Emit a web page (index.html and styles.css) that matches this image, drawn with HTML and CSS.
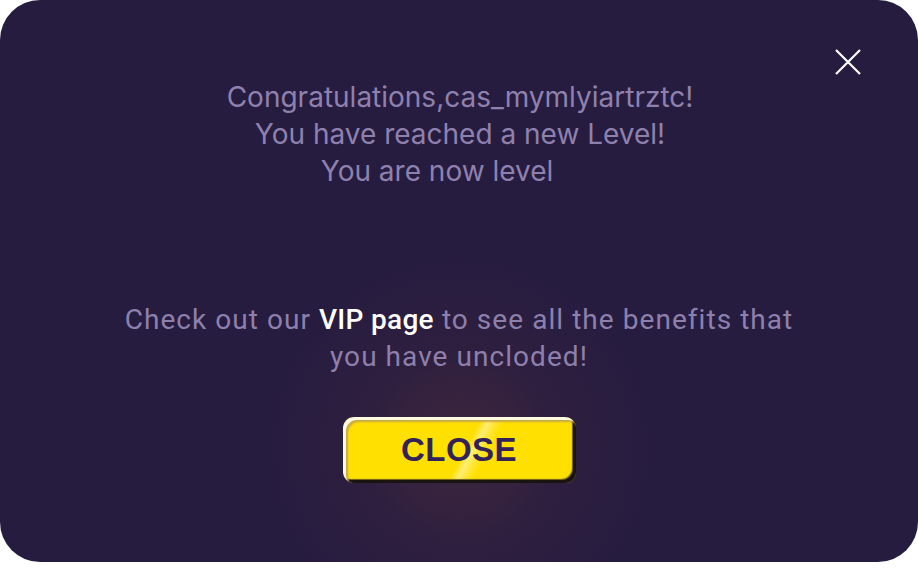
FILE: index.html
```html
<!DOCTYPE html>
<html>
<head>
<meta charset="utf-8">
<link rel="stylesheet" href="styles.css">
</head>
<body>
<div class="modal">
  <button class="x-btn" aria-label="Close">
    <svg width="28" height="28" viewBox="0 0 28 28"><path d="M2 2 L26 26 M26 2 L2 26" stroke="#fff" stroke-width="2.2" fill="none"/></svg>
  </button>
  <div class="congrats">
    <p>Congratulations,cas_mymlyiartrztc!</p>
    <p>You have reached a new Level!</p>
    <p>You are now level <span class="lvl"></span></p>
  </div>
  <p class="vip">Check out our <strong>VIP page</strong> to see all the benefits that<br>you have uncloded!</p>
  <div class="btn-wrap">
    <button class="close-btn"><span>CLOSE</span></button>
  </div>
</div>
</body>
</html>
```
FILE: styles.css
```css
html, body { margin: 0; padding: 0; background: #fff; }
body { width: 918px; height: 582px; overflow: hidden; }
.modal {
  position: relative;
  width: 918px;
  height: 562px;
  border-radius: 40px;
  background:
    radial-gradient(circle at 460px 448px, rgba(66, 40, 60, 0.9) 0, rgba(52, 33, 62, 0.55) 100px, rgba(38, 28, 64, 0) 200px),
    #261c40;
  display: flex;
  flex-direction: column;
  align-items: center;
  box-sizing: border-box;
  padding-top: 79px;
}
.x-btn {
  position: absolute;
  top: 48px;
  right: 56px;
  width: 28px;
  height: 28px;
  padding: 0;
  border: 0;
  background: none;
}
.x-btn svg { display: block; }
.congrats {
  font-family: Inter, "Open Sans", sans-serif;
  font-size: 28px;
  line-height: 37px;
  color: #8f81ae;
  text-align: center;
  margin-left: 2px;
}
.congrats p { margin: 0; }
.lvl { display: inline-block; width: 38px; }
.vip {
  margin: 111px 0 0;
  font-family: Roboto, sans-serif;
  font-size: 28px;
  letter-spacing: 1.05px;
  line-height: 37px;
  color: #8e80ac;
  text-align: center;
}
.vip strong { color: #fff; font-weight: 500; letter-spacing: 0.3px; }
.btn-wrap { margin-top: 42px; }
.close-btn {
  width: 233px;
  height: 66px;
  border: 0;
  padding: 0;
  border-radius: 11px;
  background:
    linear-gradient(118deg, rgba(255,255,255,0) 52%, rgba(255,255,255,0.45) 55%, rgba(255,255,255,0.2) 58%, rgba(255,255,255,0) 61%),
    #ffe000;
  box-shadow:
    inset 3px 3px 0 #fffbe0,
    inset 5px 5px 2px #c9a84a,
    inset -3px -3px 0 #1a1410,
    inset -4px -4px 1px #6b5a20;
  font-family: "Liberation Sans", Arial, sans-serif;
  font-weight: 700;
  font-size: 33px;
  color: #33215a;
  letter-spacing: 0.5px;
  display: flex;
  align-items: center;
  justify-content: center;
}
```
